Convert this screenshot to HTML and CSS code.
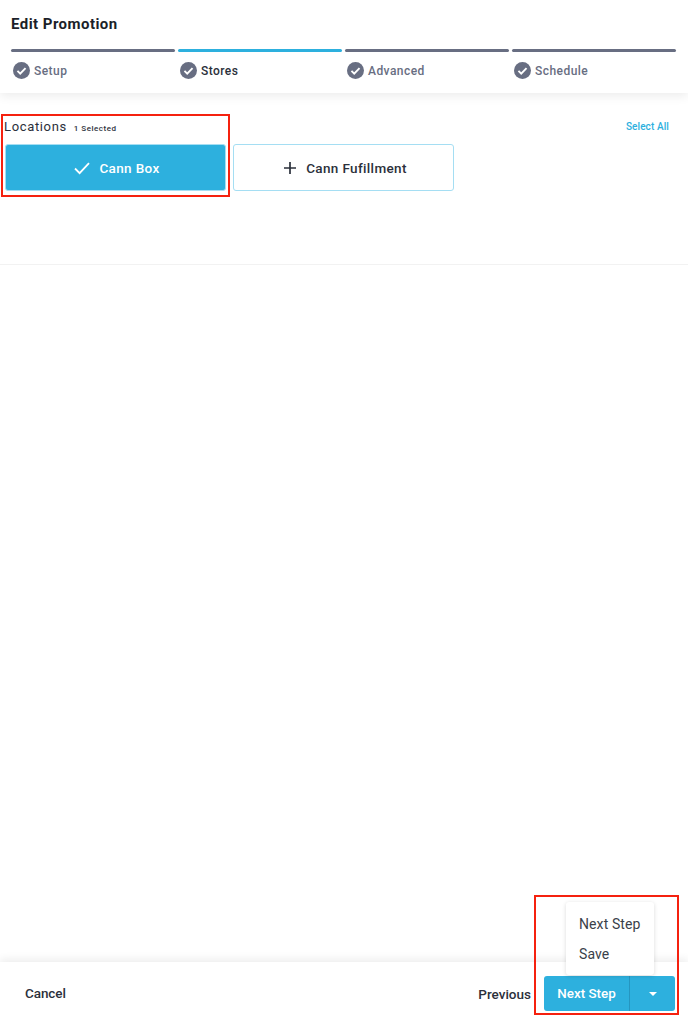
FILE: index.html
```html
<!DOCTYPE html>
<html lang="en">
<head>
  <meta charset="UTF-8" />
  <meta name="viewport" content="width=device-width, initial-scale=1" />
  <title>Edit Promotion</title>
  <link rel="stylesheet" href="styles.css">
</head>
<body>
  <div class="page">

    <header class="top">
      <h1>Edit Promotion</h1>
      <div class="steps">
        <div class="step">
          <div class="step-bar"></div>
          <div class="step-label">
            <svg class="step-icon" viewBox="0 0 16 16"><circle cx="8" cy="8" r="8" fill="#686e82"/><path d="M4.2 8.3l2.6 2.6 5-5.2" fill="none" stroke="#fff" stroke-width="1.8"/></svg>
            <span class="step-name">Setup</span>
          </div>
        </div>
        <div class="step active">
          <div class="step-bar"></div>
          <div class="step-label">
            <svg class="step-icon" viewBox="0 0 16 16"><circle cx="8" cy="8" r="8" fill="#686e82"/><path d="M4.2 8.3l2.6 2.6 5-5.2" fill="none" stroke="#fff" stroke-width="1.8"/></svg>
            <span class="step-name">Stores</span>
          </div>
        </div>
        <div class="step">
          <div class="step-bar"></div>
          <div class="step-label">
            <svg class="step-icon" viewBox="0 0 16 16"><circle cx="8" cy="8" r="8" fill="#686e82"/><path d="M4.2 8.3l2.6 2.6 5-5.2" fill="none" stroke="#fff" stroke-width="1.8"/></svg>
            <span class="step-name">Advanced</span>
          </div>
        </div>
        <div class="step">
          <div class="step-bar"></div>
          <div class="step-label">
            <svg class="step-icon" viewBox="0 0 16 16"><circle cx="8" cy="8" r="8" fill="#686e82"/><path d="M4.2 8.3l2.6 2.6 5-5.2" fill="none" stroke="#fff" stroke-width="1.8"/></svg>
            <span class="step-name">Schedule</span>
          </div>
        </div>
      </div>
    </header>

    <main class="content">
      <section class="locations">
        <div class="locations-head">
          <div>
            <span class="locations-title">Locations</span>
            <span class="locations-count">1 Selected</span>
          </div>
          <a class="select-all" href="#">Select All</a>
        </div>
        <div class="location-list">
          <button class="location selected">
            <svg viewBox="0 0 16 16" width="16" height="16"><path d="M1 8.5l4.6 4.6L15 3.2" fill="none" stroke="#fff" stroke-width="1.8"/></svg>
            Cann Box
          </button>
          <button class="location">
            <svg viewBox="0 0 14 14" width="14" height="14"><path d="M7 1v12M1 7h12" fill="none" stroke="#2b303b" stroke-width="1.7"/></svg>
            Cann Fufillment
          </button>
        </div>
      </section>
    </main>

    <footer class="bottom">
      <a class="cancel" href="#">Cancel</a>
      <div class="actions">
        <a class="previous" href="#">Previous</a>
        <div class="split">
          <button class="split-main">Next Step</button>
          <button class="split-arrow"><span class="caret"></span></button>
        </div>
      </div>
    </footer>

    <div class="menu">
      <div class="menu-item">Next Step</div>
      <div class="menu-item">Save</div>
    </div>

    <div class="mark mark-locations"></div>
    <div class="mark mark-actions"></div>
  </div>
</body>
</html>
```

FILE: styles.css
```css
* {
  box-sizing: border-box;
}
html, body {
  margin: 0;
  background: #fff;
}
body {
  font-family: Roboto, sans-serif;
  color: #2b303b;
}
.page {
  position: relative;
  width: 688px;
  height: 1016px;
  overflow: hidden;
  display: flex;
  flex-direction: column;
}

/* header + steps */
.top {
  height: 93px;
  padding: 14px 12px 0 11px;
  background: #fff;
  box-shadow: 0 3px 10px rgba(0, 0, 0, 0.08);
}
h1 {
  margin: 0;
  font-size: 15px;
  line-height: 20px;
  font-weight: 700;
  letter-spacing: 0.45px;
  color: #1b1f29;
}
.steps {
  display: grid;
  grid-template-columns: repeat(4, 1fr);
  gap: 3px;
  margin-top: 15px;
}
.step-bar {
  height: 3px;
  border-radius: 2px;
  background: #686e82;
}
.step.active .step-bar {
  background: #2db0de;
}
.step-label {
  display: flex;
  align-items: center;
  gap: 4px;
  margin-top: 9px;
  padding-left: 2px;
  font-size: 12px;
  line-height: 17px;
  font-weight: 500;
  letter-spacing: 0.45px;
  color: #686e82;
}
.step-name {
  padding-top: 2px;
}
.step.active .step-label {
  color: #2b303b;
}
.step-icon {
  width: 17px;
  height: 17px;
  flex-shrink: 0;
}

/* locations */
.content {
  flex: 1;
}
.locations {
  height: 172px;
  padding: 24px 19px 0 5px;
  border-bottom: 1px solid #f2f2f2;
}
.locations-head {
  display: flex;
  justify-content: space-between;
  align-items: center;
  height: 18px;
  margin-top: -1px;
  margin-left: -1px;
}
.locations-title {
  font-size: 13px;
  font-weight: 400;
  letter-spacing: 0.65px;
}
.locations-count {
  margin-left: 3px;
  font-size: 8px;
  font-weight: 500;
  letter-spacing: 0.5px;
}
.select-all {
  margin-top: 2px;
  font-size: 10px;
  font-weight: 500;
  letter-spacing: 0.1px;
  color: #2db0de;
  text-decoration: none;
}
.location-list {
  display: flex;
  gap: 7px;
  margin-top: 10px;
}
.location {
  width: 221px;
  height: 47px;
  display: flex;
  align-items: center;
  justify-content: center;
  gap: 9px;
  padding: 0 0 0 3px;
  border: 1px solid #a5def3;
  border-radius: 3px;
  background: #fff;
  font-family: inherit;
  font-size: 13.5px;
  font-weight: 500;
  letter-spacing: 0.35px;
  color: #2b303b;
}
.location.selected {
  background: #2db0de;
  color: #fff;
}

/* footer */
.bottom {
  height: 54px;
  display: flex;
  justify-content: space-between;
  align-items: center;
  padding: 14px 13px 5px 25px;
  background: #fff;
  box-shadow: 0 -3px 8px rgba(0, 0, 0, 0.07);
}
.cancel,
.previous {
  font-size: 13.5px;
  font-weight: 500;
  color: #2b303b;
  text-decoration: none;
}
.cancel {
  margin-top: -1px;
  letter-spacing: -0.1px;
}
.actions {
  display: flex;
  align-items: center;
  gap: 13px;
}
.split {
  display: flex;
  width: 131px;
  height: 35px;
  border-radius: 3px;
  overflow: hidden;
  background: #2db0de;
}
.split button {
  border: 0;
  padding: 0;
  background: none;
  font-family: inherit;
  color: #fff;
}
.split-main {
  width: 85px;
  font-size: 13.4px;
  font-weight: 500;
}
.split-arrow {
  flex: 1;
  display: flex;
  align-items: center;
  justify-content: center;
  border-left: 1px solid #2596c0 !important;
}
.caret {
  border-left: 4px solid transparent;
  border-right: 4px solid transparent;
  border-top: 4px solid #fff;
}

/* dropdown above the split button */
.menu {
  position: absolute;
  left: 566px;
  top: 902px;
  width: 88px;
  height: 73px;
  padding-top: 7px;
  background: #fff;
  border-radius: 3px;
  box-shadow: 0 1px 4px rgba(0, 0, 0, 0.15);
}
.menu-item {
  height: 30px;
  padding-left: 13px;
  font-size: 14px;
  line-height: 30px;
  letter-spacing: 0.1px;
  color: #3a3f4a;
}

/* red annotation boxes */
.mark {
  position: absolute;
  border: 2.5px solid #f5210f;
}
.mark-locations {
  left: 1px;
  top: 114px;
  width: 229px;
  height: 83px;
}
.mark-actions {
  left: 534px;
  top: 895px;
  width: 145px;
  height: 120px;
}
```
